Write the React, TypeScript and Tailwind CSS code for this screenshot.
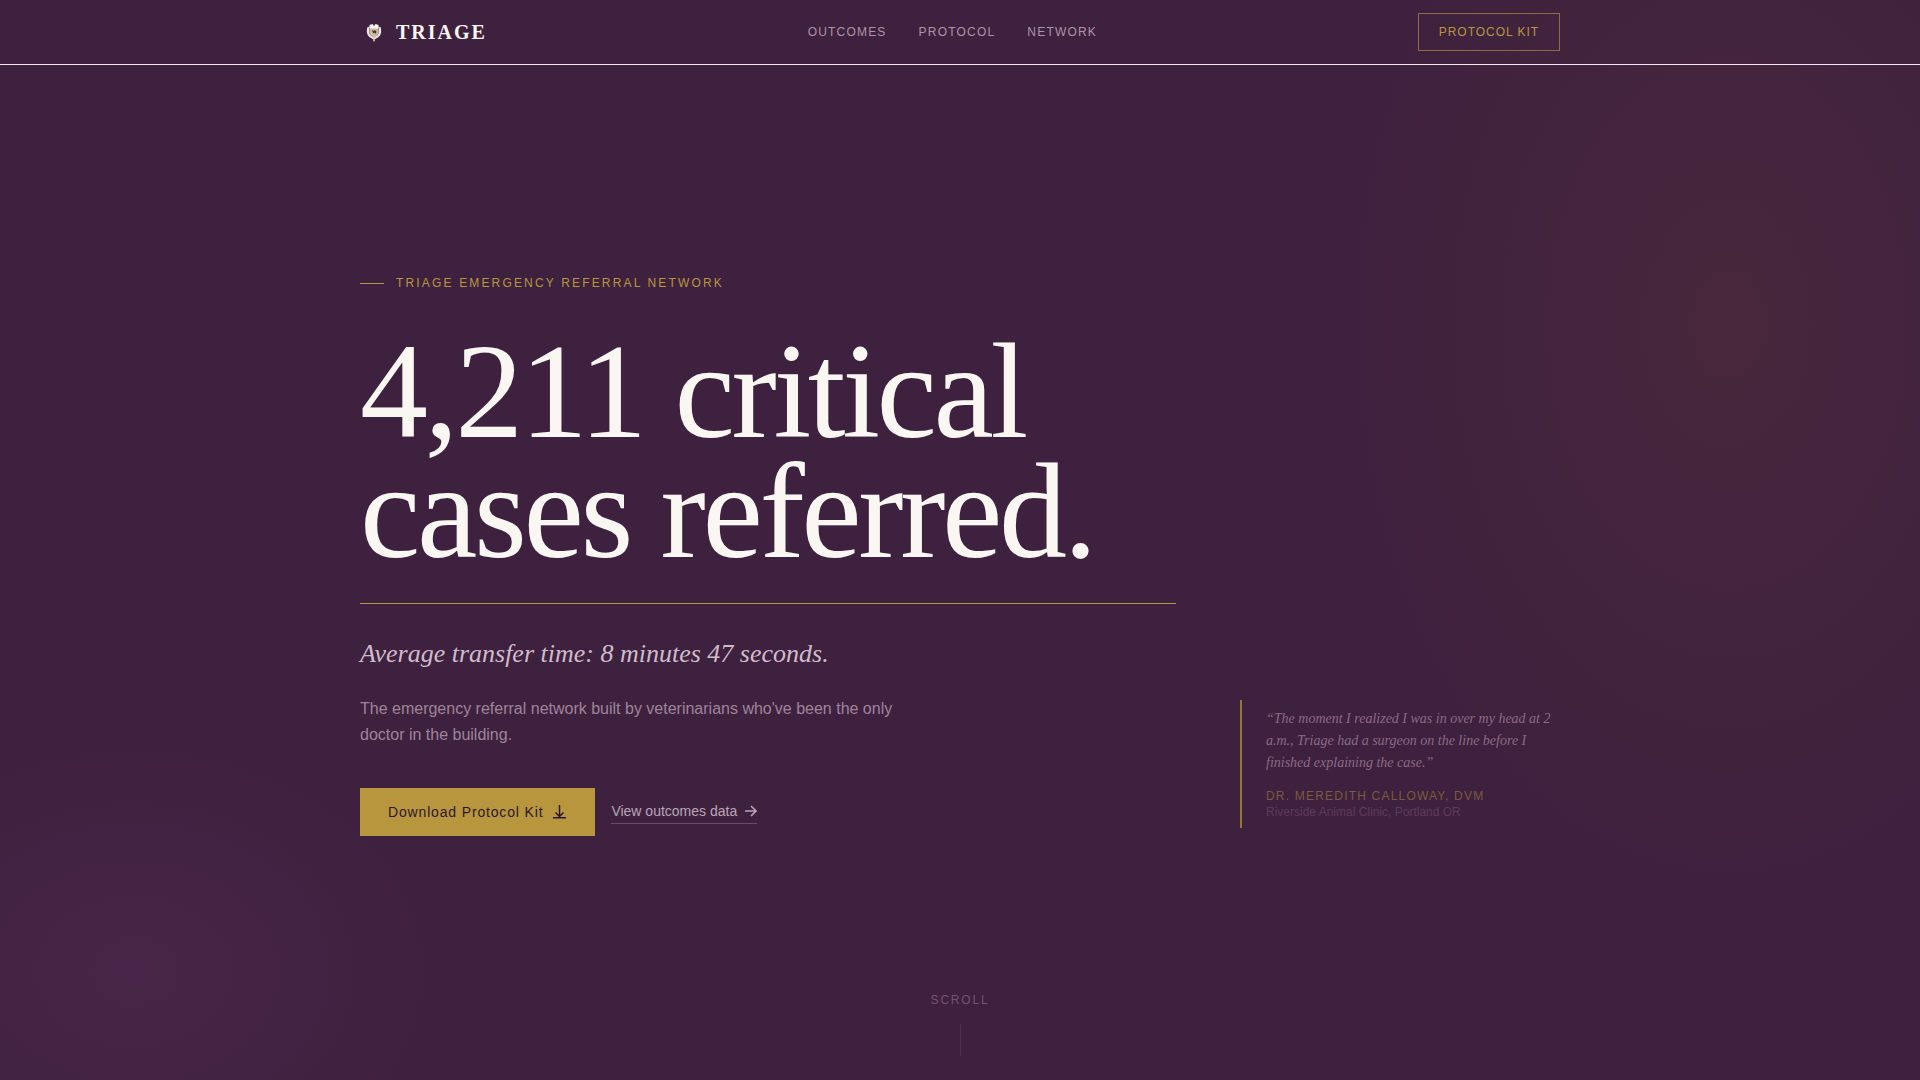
import React from 'react';

const navLinks = [
  { label: 'Outcomes', href: '#outcomes' },
  { label: 'Protocol', href: '#protocol' },
  { label: 'Network', href: '#network' },
];

// --- Icons ---

const Crest: React.FC = () => (
  <svg viewBox="0 1 28 28" className="size-7" aria-hidden="true">
    {/* Laurel branches */}
    <path
      d="M8.200 11c-1 4.800.8 8.500 4.800 10M19.800 11c1 4.800-.8 8.500-4.800 10"
      stroke="#f0e6e0"
      strokeWidth="2.200"
      strokeLinecap="round"
      fill="none"
    />
    {/* Shield */}
    <path d="M10 10h8l.8 4c0 3.200-1.800 5.200-4.800 7-3-1.800-4.800-3.800-4.800-7z" fill="#cdbb9f" />
    <path d="M14 19.500v4" stroke="#d9cbb8" strokeWidth="1.800" strokeLinecap="round" />
    <path d="m11.800 13 1.800 1 1.200-1 1.800 1.800-1 2-1.200-1-1.200.4z" fill="#4a3040" />
    {/* Crown */}
    <path d="M9.500 8 12.500 7l1.500 2 1.500-2 3 1 .3 3.200-2.500.3h-4.600l-2.500-.3z" fill="#faf7f2" />
  </svg>
);

const DownloadIcon: React.FC = () => (
  <svg viewBox="0 0 16 16" className="size-4" fill="none" stroke="currentColor" strokeWidth="1.500" aria-hidden="true">
    <path d="M8.500 1v12M4.500 8.500l4 4 4-4M2 13.800h13" />
  </svg>
);

const ArrowIcon: React.FC = () => (
  <svg viewBox="0 0 12 12" className="size-3" fill="none" stroke="currentColor" strokeWidth="1.600" aria-hidden="true">
    <path d="M0 6h11M6 1l5 5-5 5" />
  </svg>
);

// --- Sections ---

const Header: React.FC = () => (
  <header className="relative z-10 border-b border-[#f3e9ee]">
    <div className="mx-auto flex h-16 max-w-[1200px] items-center justify-between">
      <a href="#top" className="flex items-center gap-2 font-['Liberation_Serif',serif] text-xl font-bold tracking-widest text-[#faf7f2]">
        <Crest />
        TRIAGE
      </a>
      <nav className="flex gap-8">
        {navLinks.map((link) => (
          <a key={link.label} href={link.href} className="text-xs tracking-widest text-[#ac94a7] uppercase">
            {link.label}
          </a>
        ))}
      </nav>
      <button type="button" className="h-[38px] border border-[#8d6c40] px-5 text-xs tracking-[0.08em] text-[#b8963e] uppercase">
        Protocol Kit
      </button>
    </div>
  </header>
);

const Testimonial: React.FC = () => (
  <figure className="mb-2 border-l-2 border-[#94753e] py-2 pl-6">
    <blockquote className="font-['Liberation_Serif',serif] text-sm leading-[22px] text-[#8b6a86] italic">
      “The moment I realized I was in over my head at 2 a.m., Triage had a surgeon on the line before I finished
      explaining the case.”
    </blockquote>
    <figcaption className="mt-3.5 text-xs leading-4">
      <div className="tracking-widest text-[#7b5a3f] uppercase">Dr. Meredith Calloway, DVM</div>
      <div className="text-[#5d3b5b]">Riverside Animal Clinic, Portland OR</div>
    </figcaption>
  </figure>
);

const Hero: React.FC = () => (
  <main className="relative mx-auto grid w-full max-w-[1200px] flex-1 grid-cols-[1fr_320px] content-center items-end gap-16 pt-[54px]">
    <div>
      <div className="flex items-center gap-3 text-xs tracking-[0.18em] text-[#b8963e] uppercase">
        <span className="h-px w-6 bg-[#b8963e]" />
        Triage Emergency Referral Network
      </div>
      <h1 className="mt-10 font-['Liberation_Serif',serif] text-[136px] leading-[120px] tracking-tight text-[#faf7f2]">
        4,211 critical
        <br />
        cases referred.
      </h1>
      <div className="mt-8 h-px bg-[#b8963e]" />
      <p className="mt-8 font-['Liberation_Serif',serif] text-[26px] leading-9 text-[#cfbccb] italic">
        Average transfer time: 8 minutes 47 seconds.
      </p>
      <p className="mt-6 max-w-[540px] leading-[26px] text-[#9f849b]">
        The emergency referral network built by veterinarians who've been the only doctor in the building.
      </p>
      <div className="mt-10 flex items-center gap-4">
        <button type="button" className="flex h-12 items-center gap-2 bg-[#b8963e] px-7 text-sm tracking-[0.06em] text-[#2d162d]">
          Download Protocol Kit
          <DownloadIcon />
        </button>
        <a href="#outcomes" className="flex items-center gap-2 border-b border-[#6b4d69] pb-0.5 text-sm text-[#baa5b6]">
          View outcomes data
          <ArrowIcon />
        </a>
      </div>
    </div>
    <Testimonial />
  </main>
);

const App: React.FC = () => (
  <div id="top" className="relative flex min-h-screen flex-col overflow-hidden bg-[#3e213e] font-['Liberation_Sans',sans-serif]">
    {/* Ambient glows */}
    <div className="absolute inset-0 bg-[radial-gradient(ellipse_380px_560px_at_90%_30%,#48273c,transparent),radial-gradient(ellipse_300px_230px_at_7%_90%,#482548,transparent)]" />
    <Header />
    <Hero />
    <div className="relative flex flex-col items-center gap-4 pb-6 text-xs tracking-[0.15em] text-[#75536f] uppercase">
      Scroll
      <span className="h-8 w-px bg-[#4d2e4d]" />
    </div>
  </div>
);

export default App;
